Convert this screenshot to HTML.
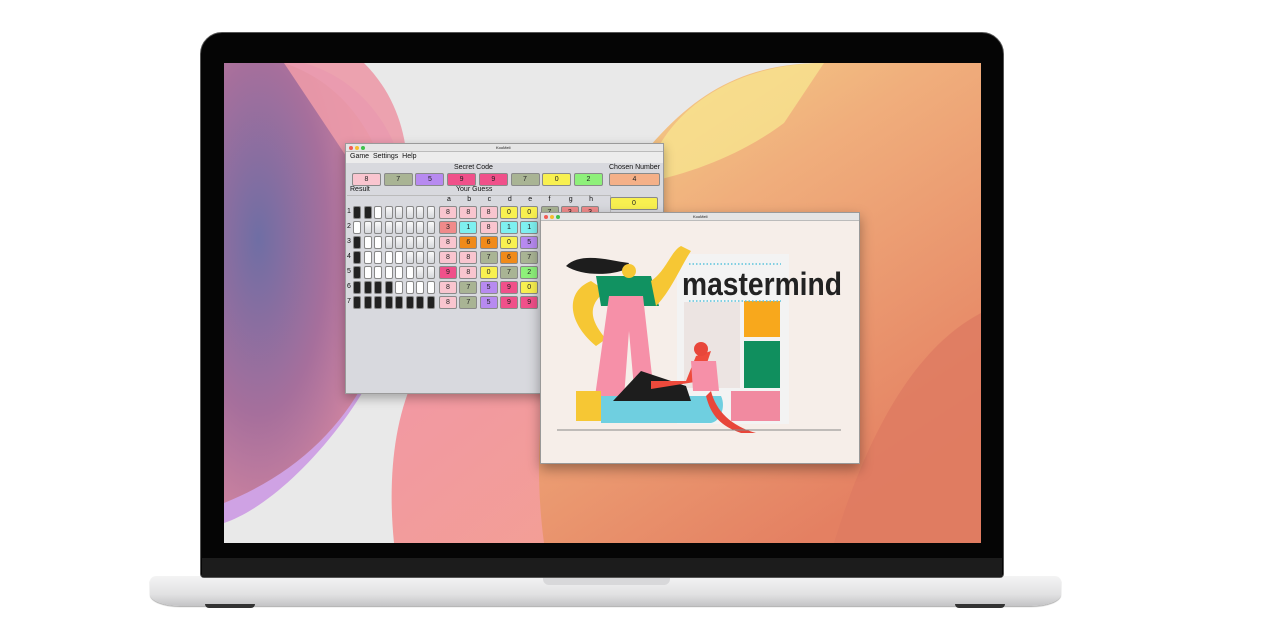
<!DOCTYPE html>
<html><head><meta charset="utf-8"><style>
*{margin:0;padding:0;box-sizing:border-box}
body{width:1263px;height:640px;background:#fff;position:relative;overflow:hidden;font-family:"Liberation Sans",sans-serif}
.abs{position:absolute}
.btn{position:absolute;height:13px;border-radius:2px;border:1px solid #8a8a8a;font-size:7px;line-height:11px;text-align:center;color:#222}
.peg{position:absolute;width:8px;height:13px;border-radius:2px;border:1px solid #888}
.t{position:absolute;font-size:7px;color:#111}
</style></head><body>
<div class="abs" style="left:150px;top:576px;width:911px;height:30px;border-radius:6px 6px 30px 30px/6px 6px 12px 12px;background:linear-gradient(#f4f4f4,#e2e2e3 60%,#c4c4c6);box-shadow:0 1px 1px #aaa"></div>
<div class="abs" style="left:543px;top:577px;width:127px;height:8px;border-radius:0 0 6px 6px;background:#d8d8da"></div>
<div class="abs" style="left:205px;top:604px;width:50px;height:4px;border-radius:0 0 20px 20px;background:#333"></div>
<div class="abs" style="left:955px;top:604px;width:50px;height:4px;border-radius:0 0 20px 20px;background:#333"></div>
<div class="abs" style="left:200px;top:32px;width:804px;height:546px;border-radius:22px 22px 4px 4px;background:#050505;border:1px solid #555"></div>
<div class="abs" style="left:202px;top:558px;width:800px;height:19px;background:#1c1c1c"></div>
<div class="abs" style="left:224px;top:63px;width:757px;height:480px;overflow:hidden;background:#e9e9e9">
<svg width="757" height="480" style="position:absolute;left:0;top:0">
<defs>
<linearGradient id="pk" x1="0" y1="0" x2="1" y2="1"><stop offset="0" stop-color="#f296a8"/><stop offset="1" stop-color="#f3a190"/></linearGradient>
<linearGradient id="or" x1="0" y1="0" x2="0.6" y2="1"><stop offset="0" stop-color="#f6d88a"/><stop offset="0.4" stop-color="#f0ae7c"/><stop offset="1" stop-color="#e48062"/></linearGradient>
<radialGradient id="pu" cx="0.2" cy="0.4" r="0.8"><stop offset="0" stop-color="#6f6ea4"/><stop offset="0.5" stop-color="#a66f9c"/><stop offset="1" stop-color="#e48fa2"/></radialGradient>
</defs>
<path d="M0 0 H80 C150 20 190 90 185 170 C180 260 150 320 110 370 C70 420 30 450 0 460 Z" fill="#cfa2e4"/>
<path d="M0 0 H60 C150 30 180 130 170 220 C160 320 100 400 0 440 Z" fill="url(#pu)"/>
<path d="M60 0 H140 C190 50 190 120 175 180 L140 120 Z" fill="#ec9aa8" opacity="0.9"/>
<path d="M170 480 C160 380 180 280 260 240 C340 210 420 230 460 300 C490 360 480 430 470 480 Z" fill="url(#pk)"/>
<path d="M320 480 C300 330 340 180 420 90 C470 30 520 0 600 0 H757 V480 Z" fill="url(#or)"/>
<path d="M420 120 C440 40 520 0 600 0 L560 60 C520 90 470 110 420 120Z" fill="#f7e48e" opacity="0.8"/>
<path d="M610 480 C650 350 700 280 757 250 V480 Z" fill="#de7a62" opacity="0.8"/>
</svg>
</div>
<div class="abs" style="left:345px;top:143px;width:319px;height:251px;background:#d8d9de;border:1px solid #9a9a9a;box-shadow:0 4px 10px rgba(0,0,0,.3)">
 <div class="abs" style="left:0;top:0;width:317px;height:8px;background:#e6e6e6;border-bottom:1px solid #bbb"></div>
 <div class="abs" style="left:3px;top:2px;width:4px;height:4px;border-radius:50%;background:#f25c54"></div>
 <div class="abs" style="left:9px;top:2px;width:4px;height:4px;border-radius:50%;background:#f6bd2f"></div>
 <div class="abs" style="left:15px;top:2px;width:4px;height:4px;border-radius:50%;background:#3fc24a"></div>
 <div class="t" style="left:150px;top:1px;font-size:4px">KooMeli</div>
 <div class="abs" style="left:0;top:8px;width:317px;height:11px;background:#ececec"></div>
 <div class="t" style="left:4px;top:9px">Game&nbsp;&nbsp;Settings&nbsp;&nbsp;Help</div>
 <div class="t" style="left:108px;top:20px">Secret Code</div>
 <div class="t" style="left:263px;top:20px">Chosen Number</div>
 <div class="t" style="left:4px;top:42px">Result</div>
 <div class="t" style="left:110px;top:42px">Your Guess</div>
 <div class="abs" style="left:1px;top:51px;width:286px;height:1px;background:#bbb"></div>
 <div class="abs" style="left:264px;top:51px;width:52px;height:200px;background:#d8d9de;border-left:1px solid #bbb"></div>
 <div id="g"></div>
</div>
<div class="abs" style="left:540px;top:212px;width:320px;height:252px;background:#f6eee9;border:1px solid #999;box-shadow:0 5px 12px rgba(0,0,0,.35);overflow:hidden">
 <div class="abs" style="left:0;top:0;width:320px;height:8px;background:#e4e4e4;border-bottom:1px solid #bbb"></div>
 <div class="abs" style="left:3px;top:2px;width:4px;height:4px;border-radius:50%;background:#f25c54"></div>
 <div class="abs" style="left:9px;top:2px;width:4px;height:4px;border-radius:50%;background:#f6bd2f"></div>
 <div class="abs" style="left:15px;top:2px;width:4px;height:4px;border-radius:50%;background:#3fc24a"></div>
 <div class="t" style="left:152px;top:1px;font-size:4px">KooMeli</div>
 <svg width="320" height="244" style="position:absolute;left:0;top:8px">
  <rect x="136" y="33" width="112" height="170" fill="#f3f3f3"/>
  <rect x="143" y="81" width="56" height="86" fill="#ece4e2"/>
  <rect x="203" y="80" width="36" height="36" fill="#f8a81c"/>
  <rect x="203" y="120" width="36" height="47" fill="#108f5e"/>
  <rect x="190" y="170" width="49" height="30" fill="#f18aa0"/>
  <path d="M50 60 C25 70 25 100 55 125 L65 118 C50 100 45 85 65 70Z" fill="#f6c734"/>
  <path d="M55 55 L110 55 L118 85 L60 85Z" fill="#119261"/>
  <path d="M68 75 H102 L115 190 H95 L88 110 L82 190 H52Z" fill="#f690a8"/>
  <path d="M110 60 C125 50 130 30 140 25 L150 30 C140 45 130 70 115 85Z" fill="#f6c734"/>
  <path d="M25 45 C40 30 70 40 88 42 L85 48 C70 55 40 55 25 45Z" fill="#1d1d1d"/>
  <circle cx="88" cy="50" r="7" fill="#f6c734"/>
  <path d="M35 170 L60 170 L60 200 L35 200Z" fill="#f6c734"/>
  <path d="M60 175 H180 C185 185 180 200 170 202 H60Z" fill="#6fcfe0"/>
  <path d="M72 180 L100 150 L145 165 L150 180Z" fill="#1d1d1d"/>
  <path d="M110 168 L160 160 L170 130 L155 135 L145 160 L110 160Z" fill="#ee4a3c"/>
  <path d="M150 140 H175 L178 170 H152Z" fill="#f690a8"/>
  <circle cx="160" cy="128" r="7" fill="#e8463a"/>
  <path d="M170 170 C175 190 190 205 215 212 L200 212 C180 205 170 195 165 175Z" fill="#e8463a"/>
  <line x1="16" y1="209" x2="300" y2="209" stroke="#888" stroke-width="1"/>
  <text x="141" y="74" font-family="Liberation Sans,sans-serif" font-weight="bold" font-size="32" fill="#222" textLength="160" lengthAdjust="spacingAndGlyphs">mastermind</text>
  <line x1="148" y1="43" x2="240" y2="43" stroke="#5bc3dc" stroke-width="1.5" stroke-dasharray="1.5 2"/>
  <line x1="148" y1="80" x2="240" y2="80" stroke="#5bc3dc" stroke-width="1.5" stroke-dasharray="1.5 2"/>
 </svg>
</div>
<script>
var C={p:'#f9c5cf',g:'#a9b494',u:'#b78af0',m:'#f0508a',y:'#f8f050',G:'#8ef07a',s:'#f4b088',r:'#f08a8a',c:'#7ef0f0',o:'#f08a1a'};
var g=document.getElementById('g'),h='';
function b(x,y,w,col,t){h+='<div class="btn" style="left:'+x+'px;top:'+y+'px;width:'+w+'px;background:'+C[col]+'">'+t+'</div>';}
var sc=[['p',8],['g',7],['u',5],['m',9],['m',9],['g',7],['y',0],['G',2]];
sc.forEach(function(s,i){b(6+i*31.7,29,29,s[0],s[1]);});
b(263,29,51,'s',4);b(264,53,48,'y',0);
'abcdefgh'.split('').forEach(function(l,i){h+='<div class="t" style="left:'+(101+i*20.3)+'px;top:52px">'+l+'</div>';});
var rows=[['pppyygrr','88800733','BBWLLLLL'],['rcpcc','31811','WLLLLLLL'],['pooyu','86605','BWWLLLLL'],['ppgog','88767','BWWWWLLL'],['mpygG','98072','BWWWWWLL'],['pgumy','87590','BBBBWWWW'],['pgumm','87599','BBBBBBBB']];
rows.forEach(function(r,j){var y=62+j*15;
 h+='<div class="t" style="left:1px;top:'+(y+2)+'px">'+(j+1)+'</div>';
 for(var k=0;k<8;k++){var c=r[2][k];h+='<div class="peg" style="left:'+(7+k*10.5)+'px;top:'+y+'px;background:'+(c=='B'?'#222':c=='W'?'#fff':'linear-gradient(#fafafa,#d6d8dc)')+'"></div>';}
 for(var k=0;k<r[0].length;k++)b(93+k*20.3,y,18,r[0][k],r[1][k]);
});
g.innerHTML=h;
</script>
</body></html>
